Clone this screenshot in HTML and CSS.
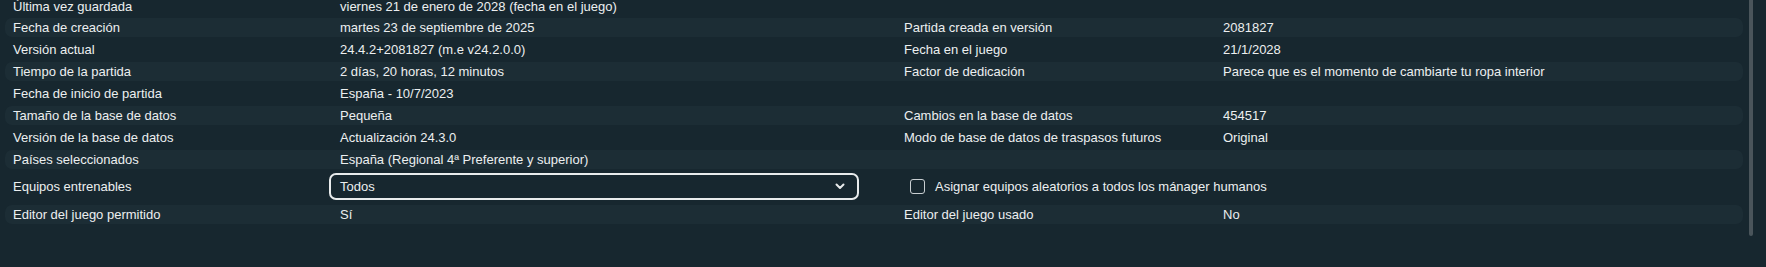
FILE: index.html
```html
<!DOCTYPE html>
<html lang="es">
<head>
    <meta charset="UTF-8">
    <meta name="viewport" content="width=device-width, initial-scale=1.0">
    <title>Detalles de la partida</title>
    <link rel="stylesheet" href="styles.css">
</head>
<body>

    <div class="panel">
        <div class="details">
            <div class="row">
                <span class="label">Última vez guardada</span>
                <span class="value">viernes 21 de enero de 2028 (fecha en el juego)</span>
                <span class="label"></span>
                <span class="value"></span>
            </div>
            <div class="row striped">
                <span class="label">Fecha de creación</span>
                <span class="value">martes 23 de septiembre de 2025</span>
                <span class="label">Partida creada en versión</span>
                <span class="value">2081827</span>
            </div>
            <div class="row">
                <span class="label">Versión actual</span>
                <span class="value">24.4.2+2081827 (m.e v24.2.0.0)</span>
                <span class="label">Fecha en el juego</span>
                <span class="value">21/1/2028</span>
            </div>
            <div class="row striped">
                <span class="label">Tiempo de la partida</span>
                <span class="value">2 días, 20 horas, 12 minutos</span>
                <span class="label">Factor de dedicación</span>
                <span class="value">Parece que es el momento de cambiarte tu ropa interior</span>
            </div>
            <div class="row">
                <span class="label">Fecha de inicio de partida</span>
                <span class="value">España - 10/7/2023</span>
                <span class="label"></span>
                <span class="value"></span>
            </div>
            <div class="row striped">
                <span class="label">Tamaño de la base de datos</span>
                <span class="value">Pequeña</span>
                <span class="label">Cambios en la base de datos</span>
                <span class="value">454517</span>
            </div>
            <div class="row">
                <span class="label">Versión de la base de datos</span>
                <span class="value">Actualización 24.3.0</span>
                <span class="label">Modo de base de datos de traspasos futuros</span>
                <span class="value">Original</span>
            </div>
            <div class="row striped">
                <span class="label">Países seleccionados</span>
                <span class="value">España (Regional 4ª Preferente y superior)</span>
                <span class="label"></span>
                <span class="value"></span>
            </div>
            <div class="row tall">
                <span class="label">Equipos entrenables</span>
                <span class="value">
                    <span class="select">
                        <span>Todos</span>
                        <svg class="chevron" width="10" height="7" viewBox="0 0 10 7">
                            <path d="M1.5 1.5 L5 5 L8.5 1.5" fill="none" stroke="#e8ebec" stroke-width="2" stroke-linecap="round" stroke-linejoin="round"/>
                        </svg>
                    </span>
                </span>
                <span class="check-cell">
                    <span class="checkbox"></span>
                    <span>Asignar equipos aleatorios a todos los mánager humanos</span>
                </span>
            </div>
            <div class="row striped">
                <span class="label">Editor del juego permitido</span>
                <span class="value">Sí</span>
                <span class="label">Editor del juego usado</span>
                <span class="value">No</span>
            </div>
        </div>
        <div class="scrollbar"></div>
    </div>

</body>
</html>
```

FILE: styles.css
```css
body {
    margin: 0;
    background-color: #17272f;
    color: #eceff0;
    font-family: "Liberation Sans", Arial, sans-serif;
    font-size: 13px;
    overflow: hidden;
}
.panel {
    display: flex;
    height: 267px;
    padding-left: 5px;
    overflow: hidden;
}
.details {
    width: 1738px;
    margin-top: -3.5px;
    display: flex;
    flex-direction: column;
    gap: 2.9px;
}
.row {
    display: grid;
    grid-template-columns: 327px 564px 319px 1fr;
    align-items: center;
    height: 19px;
    padding-left: 8px;
    border-radius: 7px;
    white-space: nowrap;
}
.row.striped {
    background-color: #1c2d35;
}
.row.tall {
    height: 30px;
}
.select {
    display: flex;
    align-items: center;
    justify-content: space-between;
    box-sizing: border-box;
    width: 530px;
    height: 27px;
    margin-left: -11px;
    padding: 0 12px 0 9px;
    border: 2px solid #e8ebec;
    border-radius: 7px;
}
.chevron {
    display: block;
}
.check-cell {
    grid-column: 3 / 5;
    display: flex;
    align-items: center;
    gap: 10px;
    padding-left: 6px;
}
.checkbox {
    width: 13px;
    height: 13px;
    border: 1.5px solid #c9cfd2;
    border-radius: 3px;
}
.scrollbar {
    width: 4px;
    height: 236px;
    margin-left: 6px;
    background-color: #4a555b;
    border-radius: 0 0 2px 2px;
}
```
